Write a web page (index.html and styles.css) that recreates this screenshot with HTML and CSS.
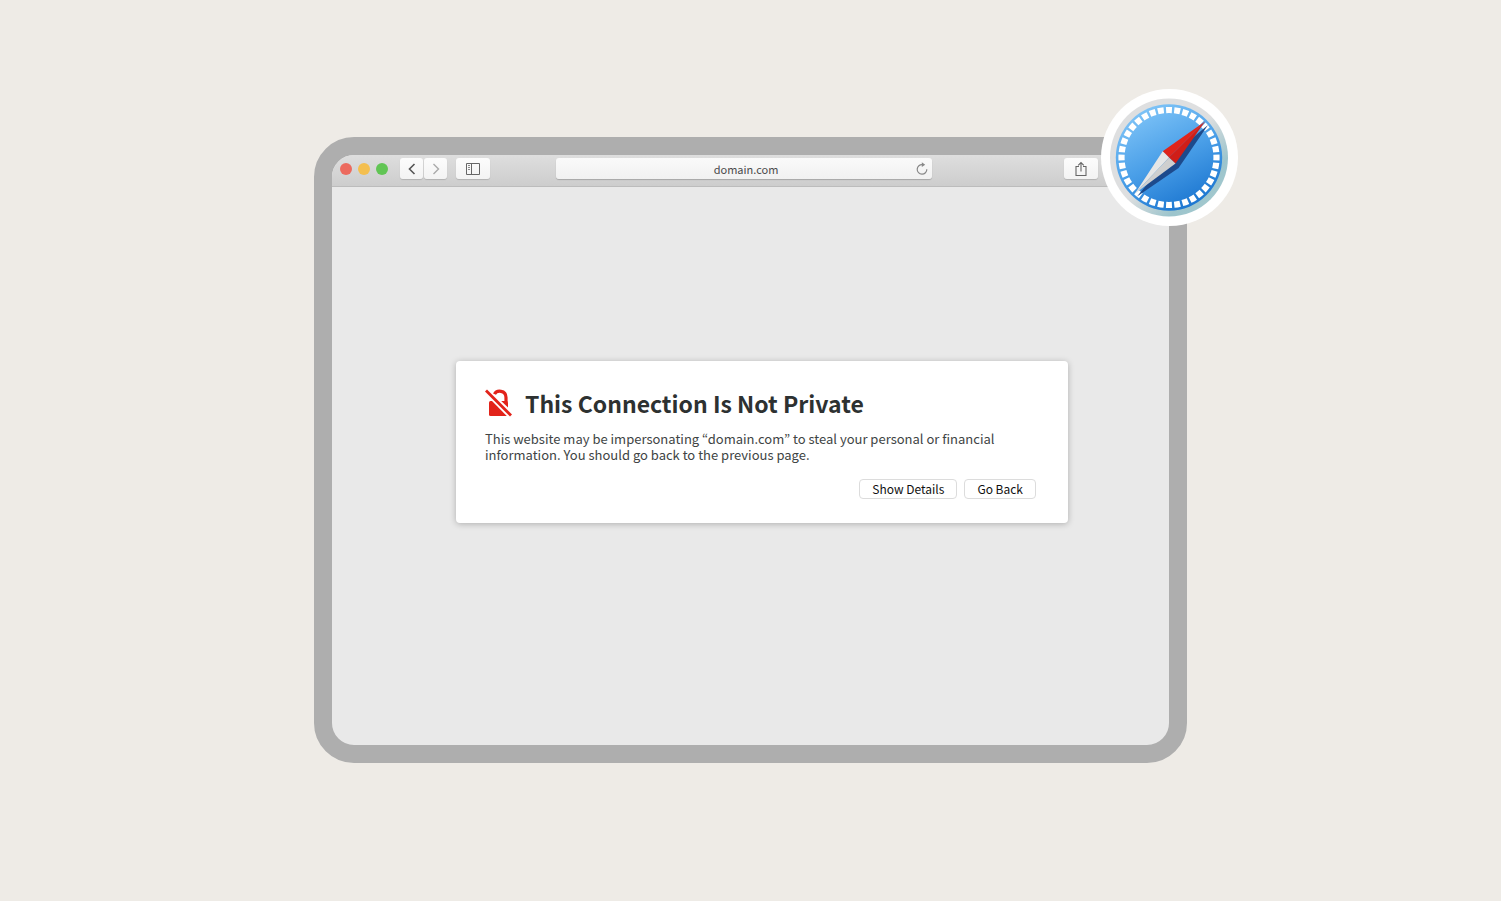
FILE: index.html
```html
<!DOCTYPE html>
<html lang="en">
<head>
    <meta charset="UTF-8">
    <meta name="viewport" content="width=device-width, initial-scale=1.0">
    <title>This Connection Is Not Private</title>
    <link rel="stylesheet" href="styles.css">
</head>
<body>

    <div class="browser">
        <div class="toolbar">
            <div class="lights">
                <span class="light red"></span>
                <span class="light yellow"></span>
                <span class="light green"></span>
            </div>
            <div class="nav">
                <button class="tool" type="button" aria-label="Back">
                    <svg width="10" height="12" viewBox="0 0 10 12"><path d="M7.5 1 L2.5 6 L7.5 11" fill="none" stroke="#555" stroke-width="1.6"/></svg>
                </button>
                <button class="tool" type="button" aria-label="Forward">
                    <svg width="10" height="12" viewBox="0 0 10 12"><path d="M2.5 1 L7.5 6 L2.5 11" fill="none" stroke="#aaa" stroke-width="1.4"/></svg>
                </button>
            </div>
            <button class="tool wide" type="button" aria-label="Sidebar">
                <svg width="14" height="12" viewBox="0 0 14 12"><path d="M.5 .5 H13.5 V11.5 H.5 Z M5.5 .5 V11.5" fill="none" stroke="#666"/><path d="M2 2.5 H4 M2 4.5 H4 M2 6.5 H4" stroke="#888"/></svg>
            </button>
            <div class="address">
                <input type="text" value="domain.com" aria-label="Address">
                <button class="reload" type="button" aria-label="Reload">
                    <svg width="12" height="14" viewBox="0 0 12 14"><path d="M6.5 2.6 A4.8 4.8 0 1 0 10.8 7.2" fill="none" stroke="#888" stroke-width="1.2"/><path d="M5.8 .3 L9.2 2.8 L5.8 4.9 Z" fill="#888"/></svg>
                </button>
            </div>
            <button class="tool wide" type="button" aria-label="Share">
                <svg width="12" height="16" viewBox="0 0 12 16"><path d="M4 5.5 H1 V14.5 H11 V5.5 H8 M6 10.5 V1.8 M3.2 4.3 L6 1.5 L8.8 4.3" fill="none" stroke="#666" stroke-width="1.1"/></svg>
            </button>
        </div>

        <div class="content">
            <div class="card">
                <div class="title">
                    <svg width="27" height="28" viewBox="0 0 27 28">
                        <path d="M4 13.5 Q4 12 5.5 12 H7 L21.8 27 H5.5 Q4 27 4 25.5 Z" fill="#e2231a"/>
                        <path d="M9.5 5.2 C11.5 .8 21 .8 21 8.5 V13" fill="none" stroke="#e2231a" stroke-width="3.2"/>
                        <path d="M16.2 12 H21.5 Q23 12 23 13.5 V18.6 Z" fill="#e2231a"/>
                        <path d="M1 1.5 L26 26.6" stroke="#fff" stroke-width="5"/>
                        <path d="M1 1.5 L26 26.6" stroke="#e2231a" stroke-width="2.8"/>
                    </svg>
                    <h1>This Connection Is Not Private</h1>
                </div>
                <p>This website may be impersonating “domain.com” to steal your personal or financial information. You should go back to the previous page.</p>
                <div class="actions">
                    <button type="button">Show Details</button>
                    <button type="button">Go Back</button>
                </div>
            </div>
        </div>

        <svg class="compass" width="137" height="137" viewBox="0 0 137 137">
            <defs>
                <linearGradient id="rim" x1="0" y1="0" x2="1" y2="1">
                    <stop offset=".5" stop-color="#dedfe0"/>
                    <stop offset=".75" stop-color="#9cc4cc"/>
                    <stop offset="1" stop-color="#a9cdd0"/>
                </linearGradient>
                <linearGradient id="face" x1=".25" y1="0" x2=".75" y2="1">
                    <stop offset="0" stop-color="#82c6f8"/>
                    <stop offset=".5" stop-color="#4a9fe8"/>
                    <stop offset="1" stop-color="#1772ce"/>
                </linearGradient>
            </defs>
            <circle cx="68.5" cy="68.5" r="68.5" fill="#fff"/>
            <circle cx="68" cy="68.5" r="59" fill="url(#rim)"/>
            <circle cx="68" cy="68.5" r="53.2" fill="url(#face)"/>
            <circle cx="68" cy="68.5" r="47.5" fill="none" stroke="#fff" stroke-width="6.2" pathLength="360" stroke-dasharray="7.2 2.8" stroke-dashoffset="3.6"/>
            <path d="M107 36 L77.6 79 L36 107.5 L68 68.5 Z" fill="#1d4a8c"/>
            <path d="M104 32.5 L61.7 62.3 L68 68.5 Z" fill="#e0241b"/>
            <path d="M104 32.5 L74.5 74.6 L68 68.5 Z" fill="#d01e17"/>
            <path d="M34 104.5 L61.7 62.3 L68 68.5 Z" fill="#e6e6e6"/>
            <path d="M34 104.5 L74.5 74.6 L68 68.5 Z" fill="#cfcfcf"/>
        </svg>
    </div>

</body>
</html>
```
FILE: styles.css
```css
* {
    box-sizing: border-box;
}

body {
    font-family: 'Noto Sans CJK JP', 'Noto Sans', sans-serif;
    background-color: #eeebe6;
    margin: 0;
    padding-bottom: 2px;
    min-height: 100vh;
    display: flex;
    align-items: center;
    justify-content: center;
}

button {
    font-family: inherit;
    padding: 0;
    cursor: pointer;
}

svg {
    display: block;
    flex-shrink: 0;
}

.browser {
    position: relative;
    width: 873px;
    max-width: 90%;
    border: 18px solid #aeaeae;
    border-radius: 40px;
    background-color: #e9e9e9;
}

.toolbar {
    display: flex;
    align-items: center;
    height: 32px;
    padding: 0 71px 3px 8px;
    background: linear-gradient(#dedede, #cdcdcd);
    border-bottom: 1px solid #bcbcbc;
    border-radius: 22px 0 0 0;
}

.lights {
    display: flex;
    gap: 6px;
    margin-right: 12px;
}

.light {
    width: 12px;
    height: 12px;
    border-radius: 50%;
}

.red {
    background-color: #ec6a5e;
}

.yellow {
    background-color: #f4bf4f;
}

.green {
    background-color: #61c554;
}

.nav {
    display: flex;
    gap: 1px;
    margin-right: 9px;
}

.tool {
    display: flex;
    align-items: center;
    justify-content: center;
    width: 23px;
    height: 21px;
    border: none;
    border-radius: 3px;
    background: linear-gradient(#fcfcfc, #f3f3f3);
    box-shadow: 0 1px 1px rgba(0, 0, 0, 0.15);
}

.wide {
    width: 34px;
}

.address {
    display: flex;
    align-items: center;
    flex: 1;
    min-width: 0;
    height: 21px;
    margin: 0 132px 0 66px;
    padding: 0 4px 0 20px;
    border-radius: 3px;
    background: linear-gradient(#fafafa, #f1f1f1);
    box-shadow: 0 1px 1px rgba(0, 0, 0, 0.2);
}

.address input {
    flex: 1;
    min-width: 0;
    height: 20px;
    border: none;
    padding: 0;
    background: none;
    font-family: inherit;
    font-size: 11px;
    text-align: center;
    color: #4a4a4a;
}

.reload {
    border: none;
    background: none;
}

.content {
    display: flex;
    justify-content: center;
    min-height: 558px;
    padding: 174px 0 20px 23px;
}

.card {
    align-self: flex-start;
    width: 612px;
    padding: 24px 32px 24px 29px;
    border-radius: 4px;
    background-color: #fff;
    box-shadow: 0 1px 6px rgba(0, 0, 0, 0.25);
}

.title {
    display: flex;
    align-items: center;
    gap: 13px;
}

h1 {
    margin: 0;
    font-size: 23px;
    line-height: 36px;
    color: #2d3131;
}

p {
    margin: 10px 0 16px;
    max-width: 520px;
    font-size: 13px;
    line-height: 16px;
    color: #404444;
}

.actions {
    display: flex;
    justify-content: flex-end;
    gap: 7px;
}

.actions button {
    height: 20px;
    padding: 0 12px;
    border: 1px solid #dcdcdc;
    border-radius: 4px;
    background-color: #fff;
    font-size: 12px;
    line-height: 16px;
    color: #111;
}

.compass {
    position: absolute;
    top: -66px;
    right: -69px;
}
```
